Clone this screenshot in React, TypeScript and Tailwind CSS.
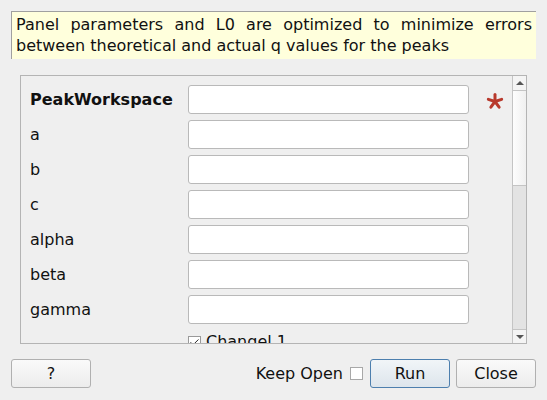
import { Check } from 'lucide-react'

const FIELDS = ['a', 'b', 'c', 'alpha', 'beta', 'gamma']

function Asterisk() {
  return (
    <svg width="18" height="18" viewBox="0 0 18 18" className="text-[#b8392c]">
      {[0, 72, 144, 216, 288].map((deg) => (
        <line
          key={deg}
          x1="9"
          y1="9.5"
          x2="9"
          y2="2.5"
          stroke="currentColor"
          strokeWidth="3"
          strokeLinecap="round"
          transform={`rotate(${deg} 9 9.5)`}
        />
      ))}
    </svg>
  )
}

function Field() {
  return <div className="h-[29px] w-[281px] rounded-[3px] border border-[#b9b9b9] bg-white" />
}

export default function App() {
  return (
    <div
      className="flex h-[400px] w-[547px] flex-col bg-[#efefef] text-[16px] text-[#111]"
      style={{ fontFamily: '"DejaVu Sans", sans-serif' }}
    >
      {/* Description */}
      <div className="mx-[11px] mt-[11px] h-[48px] w-[525px] border-t border-l border-[#a0a0a0] bg-[#ffffdc] px-[4px] pt-[2px] text-justify leading-[21px]">
        Panel parameters and L0 are optimized to minimize errors between theoretical and actual q values for the peaks
      </div>

      {/* Properties scroll area */}
      <div className="ml-[20px] mt-[16px] flex h-[269px] w-[507px] border border-[#b4b4b4]">
        <div className="flex flex-1 flex-col gap-[6px] overflow-hidden pl-[9px] pt-[9px]">
          <div className="flex h-[29px] items-center">
            <span className="w-[158px] font-bold">PeakWorkspace</span>
            <Field />
            <span className="ml-[17px] mt-[2px]">
              <Asterisk />
            </span>
          </div>
          {FIELDS.map((f) => (
            <div key={f} className="flex h-[29px] items-center">
              <span className="w-[158px]">{f}</span>
              <Field />
            </div>
          ))}
          <div className="flex h-[29px] items-center pl-[158px]">
            <span className="flex h-[13px] w-[13px] items-center justify-center border border-[#9a9a9a] bg-white">
              <Check className="h-[11px] w-[11px]" strokeWidth={2} />
            </span>
            <span className="ml-[5px]">Changel 1</span>
          </div>
        </div>
        {/* Scrollbar */}
        <div className="flex w-[14px] flex-col border-l border-[#c4c4c4]">
          <div className="flex h-[15px] items-center justify-center border-b border-[#c4c4c4] bg-[#f4f4f4]">
            <div className="h-0 w-0 border-x-[4px] border-b-[4px] border-x-transparent border-b-[#555]" />
          </div>
          <div className="h-[95px] border-b border-[#c4c4c4] bg-gradient-to-r from-[#fdfdfd] to-[#f0f0f0]" />
          <div className="flex-1 bg-[#e3e3e3]" />
          <div className="flex h-[14px] items-center justify-center border-t border-[#c4c4c4] bg-[#f4f4f4]">
            <div className="h-0 w-0 border-x-[4px] border-t-[4px] border-x-transparent border-t-[#555]" />
          </div>
        </div>
      </div>

      {/* Buttons */}
      <div className="mt-[15px] flex h-[29px] items-center px-[11px]">
        <button className="h-[29px] w-[80px] rounded-[3px] border border-[#b0b0b0] bg-gradient-to-b from-[#fafafa] to-[#ececec]">
          ?
        </button>
        <span className="ml-auto">Keep Open</span>
        <span className="ml-[7px] h-[13px] w-[13px] border border-[#a8a8a8] bg-white" />
        <button className="ml-[7px] h-[29px] w-[80px] rounded-[3px] border border-[#4d7fae] bg-gradient-to-b from-[#f1f5f8] to-[#dde5ec]">
          Run
        </button>
        <button className="ml-[6px] h-[29px] w-[80px] rounded-[3px] border border-[#b0b0b0] bg-gradient-to-b from-[#fafafa] to-[#ececec]">
          Close
        </button>
      </div>
    </div>
  )
}
